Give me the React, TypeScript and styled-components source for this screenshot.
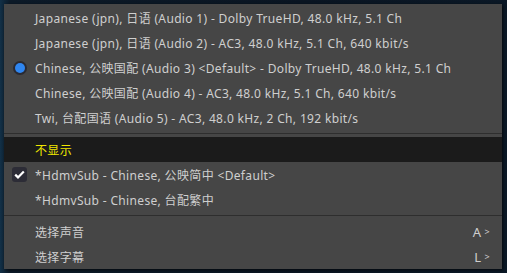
import * as React from "react";
import styled, { createGlobalStyle } from "styled-components";

const Global = createGlobalStyle`
  html, body {
    margin: 0;
    padding: 0;
    width: 507px;
    height: 273px;
    overflow: hidden;
    background: linear-gradient(90deg, #123047 0, #0c1a28 2%, #0a1522 60%, #0b1826 100%);
  }
`;

const Stage = styled.div`
  width: 507px;
  height: 273px;
  padding: 4px 5px 4px 4px;
  box-sizing: border-box;
`;

const Menu = styled.div`
  width: 498px;
  background: #464646;
  padding: 1px 0 0 0;
  box-shadow: 1px 1px 3px rgba(0, 0, 0, 0.7);
  font-family: "Noto Sans", "Noto Sans CJK SC", sans-serif;
  font-size: 12px;
  letter-spacing: 0.34px;
  color: #cfcfcf;
`;

const Item = styled.div<{ $active?: boolean; $yellow?: boolean }>`
  display: flex;
  align-items: center;
  height: 25px;
  padding: 0 12px 0 31px;
  position: relative;
  background: ${(p) => (p.$active ? "#1b1b1b" : "transparent")};
  color: ${(p) => (p.$yellow ? "#f0e600" : "#cfcfcf")};
  white-space: nowrap;
`;

const Label = styled.span`
  flex: 1;
`;

const Shortcut = styled.span`
  display: flex;
  align-items: center;
  gap: 3px;
  font-size: 13px;
  color: #cfcfcf;
`;

const Arrow = styled.span`
  font-size: 9px;
`;

const Mark = styled.span`
  position: absolute;
  left: 8px;
  top: 5px;
  width: 15px;
  height: 15px;
  display: flex;
  align-items: center;
  justify-content: center;
`;

const Radio = styled.span`
  width: 10px;
  height: 10px;
  border-radius: 50%;
  background: #2f86f0;
  box-shadow: 0 0 0 2px #2a2a32;
`;

const CheckBox = styled.span`
  width: 15px;
  height: 15px;
  border-radius: 3px;
  background: #2c2c36;
  display: flex;
  align-items: center;
  justify-content: center;
`;

const Separator = styled.div`
  height: 7px;
  display: flex;
  align-items: center;
  &::after {
    content: "";
    flex: 1;
    height: 1px;
    background: #2e2e2e;
  }
`;

const audio = [
  "Japanese (jpn), 日语 (Audio 1) - Dolby TrueHD, 48.0 kHz, 5.1 Ch",
  "Japanese (jpn), 日语 (Audio 2) - AC3, 48.0 kHz, 5.1 Ch, 640 kbit/s",
  "Chinese, 公映国配 (Audio 3) <Default> - Dolby TrueHD, 48.0 kHz, 5.1 Ch",
  "Chinese, 公映国配 (Audio 4) - AC3, 48.0 kHz, 5.1 Ch, 640 kbit/s",
  "Twi, 台配国语 (Audio 5) - AC3, 48.0 kHz, 2 Ch, 192 kbit/s",
];

export default function App() {
  return (
    <Stage>
      <Global />
      <Menu>
        {audio.map((t, i) => (
          <Item key={t}>
            {i === 2 && (
              <Mark>
                <Radio />
              </Mark>
            )}
            <Label>{t}</Label>
          </Item>
        ))}
        <Separator />
        <Item $active $yellow>
          <Label>不显示</Label>
        </Item>
        <Item>
          <Mark>
            <CheckBox>
              <svg width="11" height="9" viewBox="0 0 11 9">
                <path d="M1.2 4.6 L4 7.4 L9.8 1.4" fill="none" stroke="#ffffff" strokeWidth="2.2" />
              </svg>
            </CheckBox>
          </Mark>
          <Label>*HdmvSub - Chinese, 公映简中 &lt;Default&gt;</Label>
        </Item>
        <Item>
          <Label>*HdmvSub - Chinese, 台配繁中</Label>
        </Item>
        <Separator />
        <Item>
          <Label>选择声音</Label>
          <Shortcut>
            A<Arrow>&gt;</Arrow>
          </Shortcut>
        </Item>
        <Item>
          <Label>选择字幕</Label>
          <Shortcut>
            L<Arrow>&gt;</Arrow>
          </Shortcut>
        </Item>
      </Menu>
    </Stage>
  );
}
